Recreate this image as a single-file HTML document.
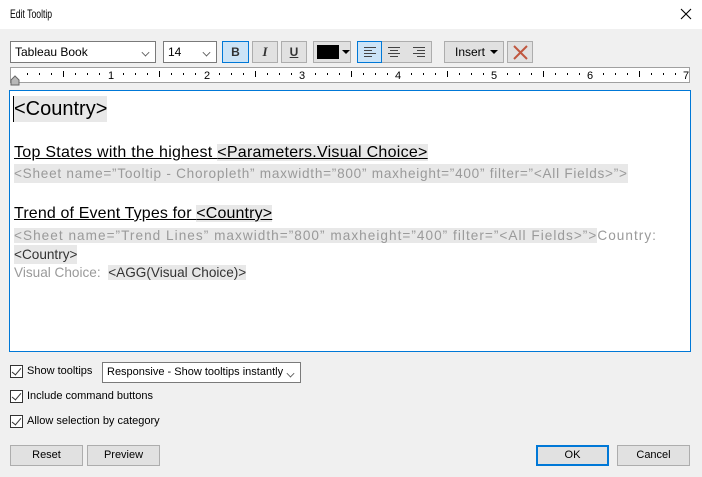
<!DOCTYPE html>
<html><head><meta charset="utf-8"><style>
*{margin:0;padding:0;box-sizing:border-box}
body{width:702px;height:477px;background:#f0f0f0;font-family:"Liberation Sans",sans-serif;font-size:11px;color:#000;position:relative;overflow:hidden}
.a{position:absolute}
.title{left:0;top:0;width:702px;height:29px;background:#fff}
.sel{background:#fff;border:1px solid #7a7a7a;height:22px;line-height:20px;padding-left:4px;font-size:12px;white-space:nowrap;overflow:hidden}
.chev{position:absolute;right:6px;top:7px;width:7px;height:7px;border-right:1px solid #555;border-bottom:1px solid #555;transform:rotate(45deg) scale(.8)}
.btn{background:#e1e1e1;border:1px solid #adadad;text-align:center;font-size:12px}
.hl{background:#e8e8e8}
.ln{position:absolute;left:14px;white-space:nowrap}
.g{color:#9a9a9a;font-size:13.6px}
.cb{position:absolute;width:13px;height:13px;border:1px solid #333;background:#fff}
.cb:after{content:"";position:absolute;left:3px;top:0px;width:4px;height:8px;border-right:1px solid #333;border-bottom:1px solid #333;transform:rotate(40deg)}
</style></head><body>
<div class="a title"></div>
<div class="a" style="left:10px;top:7px;font-size:12px;transform:scaleX(0.72);transform-origin:0 0">Edit Tooltip</div>
<svg class="a" style="left:680px;top:8px" width="12" height="12"><path d="M1 1L11 11M11 1L1 11" stroke="#000" stroke-width="1.1"/></svg>

<div class="a sel" style="left:10px;top:41px;width:146px">Tableau Book<span class="chev"></span></div>
<div class="a sel" style="left:163px;top:41px;width:54px">14<span class="chev"></span></div>
<div class="a btn" style="left:222px;top:41px;width:27px;height:22px;background:#cce4f7;border-color:#0078d7;font-weight:bold;line-height:20px;color:#333">B</div>
<div class="a btn" style="left:252px;top:41px;width:26px;height:22px;font-style:italic;font-weight:bold;line-height:20px;font-family:'Liberation Serif',serif;font-size:13px;color:#333">I</div>
<div class="a btn" style="left:281px;top:41px;width:26px;height:22px;text-decoration:underline;font-weight:bold;line-height:20px;color:#333">U</div>
<div class="a btn" style="left:313px;top:41px;width:38px;height:22px"><div class="a" style="left:3px;top:3px;width:22px;height:14px;background:#000"></div><div class="a" style="left:28px;top:8px;border-left:4px solid transparent;border-right:4px solid transparent;border-top:4px solid #000"></div></div>
<div class="a btn" style="left:357px;top:41px;width:75px;height:22px"></div>
<div class="a" style="left:357px;top:41px;width:25px;height:22px;background:#cce4f7;border:1px solid #0078d7"></div>
<svg class="a" style="left:357px;top:41px" width="75" height="22"><g stroke="#444" stroke-width="1"><path d="M7 6.5h12M7 9.5h8M7 12.5h12M7 15.5h8"/><path d="M31 6.5h12M33 9.5h8M31 12.5h12M33 15.5h8"/><path d="M56 6.5h12M60 9.5h8M56 12.5h12M60 15.5h8"/></g></svg>
<div class="a btn" style="left:444px;top:41px;width:60px;height:22px;line-height:20px;padding-right:8px">Insert<span class="a" style="left:45px;top:8px;border-left:4px solid transparent;border-right:4px solid transparent;border-top:4px solid #000"></span></div>
<div class="a btn" style="left:507px;top:41px;width:26px;height:22px"><svg class="a" style="left:5px;top:3px" width="15" height="15"><path d="M1 1L14 14M14 1L1 14" stroke="#c0573f" stroke-width="2"/></svg></div>

<div class="a" style="left:10px;top:67px;width:680px;height:16px;background:#fff;border:1px solid #a0a0a0"></div>
<svg class="a" style="left:10px;top:67px" width="681" height="22">
<defs><pattern id="p" x="5" y="0" width="96" height="16" patternUnits="userSpaceOnUse"><g fill="#000"><rect x="12" y="6" width="1" height="2"/><rect x="24" y="6" width="1" height="2"/><rect x="36" y="6" width="1" height="2"/><rect x="48" y="4" width="1" height="6"/><rect x="60" y="6" width="1" height="2"/><rect x="72" y="6" width="1" height="2"/><rect x="84" y="6" width="1" height="2"/></g></pattern></defs>
<rect x="5" y="0" width="670" height="16" fill="url(#p)"/>
<g font-size="11" font-family="Liberation Sans" text-anchor="middle"><text x="101" y="12">1</text><text x="197" y="12">2</text><text x="292" y="12">3</text><text x="388" y="12">4</text><text x="484" y="12">5</text><text x="580" y="12">6</text><text x="676" y="12">7</text></g>
<path d="M1 13L5 9L9 13V18H1Z" fill="#b8b8b8" stroke="#666"/>
</svg>

<div class="a" style="left:9px;top:90px;width:682px;height:262px;background:#fff;border:1px solid #0078d7"></div>
<div class="a" style="left:13px;top:96px;width:1px;height:26px;background:#000"></div>
<div class="ln hl" style="top:96px;font-size:20px;line-height:26px;padding-right:0px">&lt;Country&gt;</div>
<div class="ln" style="top:142px;font-size:16px;line-height:21px;text-decoration:underline;letter-spacing:0.27px">Top States with the highest <span class="hl">&lt;Parameters.Visual Choice&gt;</span></div>
<div class="ln g hl" style="top:164px;line-height:19px;letter-spacing:0.74px">&lt;Sheet name=”Tooltip - Choropleth” maxwidth=”800” maxheight=”400” filter=”&lt;All Fields&gt;”&gt;</div>
<div class="ln" style="top:203px;font-size:16px;line-height:21px;text-decoration:underline;letter-spacing:0.14px">Trend of Event Types for <span class="hl">&lt;Country&gt;</span></div>
<div class="ln g" style="top:226px;line-height:19px;letter-spacing:1.03px"><span class="hl">&lt;Sheet name=”Trend Lines” maxwidth=”800” maxheight=”400” filter=”&lt;All Fields&gt;”&gt;</span>Country:</div>
<div class="ln hl" style="top:245px;font-size:13.6px;line-height:19px;color:#333">&lt;Country&gt;</div>
<div class="ln g" style="top:263px;line-height:19px">Visual Choice:&nbsp; <span class="hl" style="color:#333">&lt;AGG(Visual Choice)&gt;</span></div>

<div class="cb" style="left:10px;top:365px"></div><div class="a" style="left:27px;top:365px">Show tooltips</div>
<div class="a sel" style="left:102px;top:362px;width:199px;height:21px;line-height:19px;font-size:11px">Responsive - Show tooltips instantly<span class="chev"></span></div>
<div class="cb" style="left:10px;top:390px"></div><div class="a" style="left:27px;top:390px">Include command buttons</div>
<div class="cb" style="left:10px;top:415px"></div><div class="a" style="left:27px;top:415px">Allow selection by category</div>

<div class="a btn" style="left:10px;top:445px;width:73px;height:21px;line-height:19px;font-size:11px">Reset</div>
<div class="a btn" style="left:87px;top:445px;width:73px;height:21px;line-height:19px;font-size:11px">Preview</div>
<div class="a btn" style="left:536px;top:445px;width:73px;height:21px;line-height:17px;border:2px solid #0078d7;font-size:11px">OK</div>
<div class="a btn" style="left:617px;top:445px;width:73px;height:21px;line-height:19px;font-size:11px">Cancel</div>
</body></html>
